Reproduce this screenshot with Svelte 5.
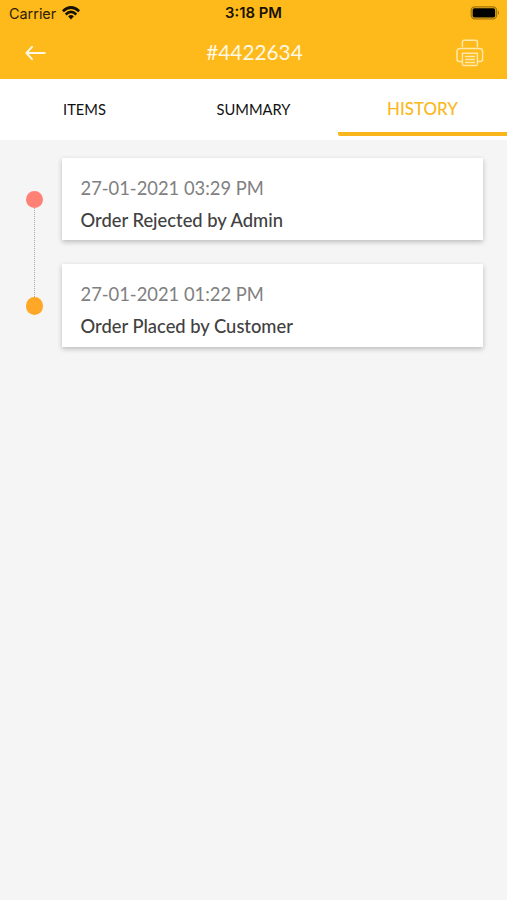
<script>
  const tabs = [
    { label: 'ITEMS', active: false },
    { label: 'SUMMARY', active: false },
    { label: 'HISTORY', active: true }
  ];
  const events = [
    { date: '27-01-2021 03:29 PM', title: 'Order Rejected by Admin', kind: 'rejected' },
    { date: '27-01-2021 01:22 PM', title: 'Order Placed by Customer', kind: 'placed' }
  ];
</script>

<div class="screen">
  <header>
    <div class="status">
      <div class="carrier">
        <span>Carrier</span>
        <svg width="18" height="14" viewBox="0 0 18 14" fill="none" stroke="#171100" stroke-width="2.7">
          <path d="M0.9 5.2Q9-2.2 17.1 5.2" />
          <path d="M3.7 8.4Q9 3.4 14.3 8.4" />
          <path d="M6.1 10.3Q9 7.8 11.9 10.3L9 13.4Z" fill="#171100" stroke="none" />
        </svg>
      </div>
      <span class="time">3:18 PM</span>
      <svg class="battery" width="31" height="14" viewBox="0 0 31 14">
        <rect x="1.2" y="0.8" width="25.4" height="12" rx="3.6" fill="none" stroke="#a1740c" stroke-width="1.2" />
        <rect x="2.6" y="2.2" width="22.6" height="9.4" rx="1.8" fill="#000" />
        <path d="M28 4.6Q30.2 6.8 28 9Z" fill="#a1740c" />
      </svg>
    </div>
    <div class="bar">
      <svg class="back" width="22" height="16" viewBox="0 0 22 16" fill="none" stroke="#fff8e4" stroke-width="1.9" stroke-linecap="round" stroke-linejoin="round">
        <path d="M19.8 8H1.6M7 1.8L1.4 8l5.6 6.2" />
      </svg>
      <h1>#4422634</h1>
      <svg class="printer" width="28" height="28" viewBox="0 0 28 28" fill="none" stroke="#ffe9a8" stroke-width="1.5" stroke-linejoin="round" stroke-linecap="round">
        <path d="M6.4 7.6V3a1.8 1.8 0 0 1 1.8-1.8h11.4A1.8 1.8 0 0 1 21.4 3v4.6" />
        <path d="M6.4 22.4H3.2A2.2 2.2 0 0 1 1 20.2V12.4a3 3 0 0 1 3-3h19.6a3 3 0 0 1 3 3v7.8a2.2 2.2 0 0 1-2.2 2.2h-3" />
        <path d="M6.4 14.2h15V25a1.6 1.6 0 0 1-1.6 1.6H8A1.6 1.6 0 0 1 6.4 25ZM9.5 17.6h9M9.5 20.5h9M9.5 23.4h9" />
      </svg>
    </div>
  </header>

  <nav>
    {#each tabs as tab}
      <div class="tab" class:active={tab.active}><span>{tab.label}</span></div>
    {/each}
  </nav>

  <main>
    {#each events as event, i}
      <div class="event">
        <div class="rail">
          <i class="dot {event.kind}"></i>
          {#if i < events.length - 1}<i class="line"></i>{/if}
        </div>
        <article>
          <time>{event.date}</time>
          <p>{event.title}</p>
        </article>
      </div>
    {/each}
  </main>
</div>

<style>
  :global(body) { margin: 0; background: #f5f5f5; }
  .screen {
    width: 507px;
    height: 900px;
    background: #f5f5f5;
    font-family: Lato, sans-serif;
    overflow: hidden;
  }
  svg { display: block; }
  header { height: 79px; background: #feb91a; }
  .status {
    display: grid;
    grid-template-columns: 1fr auto 1fr;
    align-items: center;
    height: 27px;
    padding: 0 6px 0 9px;
    font: 14.4px/27px Inter, sans-serif;
    color: #2c2003;
  }
  .carrier { display: flex; align-items: center; gap: 6px; }
  .carrier svg { margin-top: -2px; }
  .time { margin-right: 3px; font-weight: 600; font-size: 14.8px; color: #171100; }
  .battery { justify-self: end; margin-top: -1px; }
  .bar {
    display: grid;
    grid-template-columns: 1fr auto 1fr;
    align-items: center;
    height: 52px;
    padding: 0 23px 0 25px;
  }
  .back { margin-top: -1px; }
  h1 { margin: -2px 0 0; font-size: 20.8px; line-height: 50px; font-weight: 400; color: #fff8e4; }
  .printer { justify-self: end; margin-top: -1px; }
  nav { display: flex; height: 61px; background: #fff; }
  .tab {
    flex: 0 0 169px;
    display: flex;
    justify-content: center;
    box-sizing: border-box;
    height: 57px;
    font-size: 14.7px;
    line-height: 60px;
    color: #111;
  }
  .active {
    border-bottom: 4px solid #f9b51c;
    border-radius: 2px 0 0 2px;
    font-size: 16.9px;
    font-weight: 500;
    color: #f9b820;
  }
  main { display: flex; flex-direction: column; gap: 24px; padding: 18px 24px 0 26px; }
  .event { display: flex; gap: 19px; height: 82.3px; }
  .rail { display: flex; flex-direction: column; align-items: center; width: 17px; padding-top: 33px; }
  .dot { flex: none; width: 17.4px; height: 17.4px; border-radius: 50%; }
  .rejected { background: #ff8176; }
  .placed { background: #ffa827; }
  .line { flex: none; height: 89px; border-left: 1px dotted #aaa; }
  article {
    flex: 1;
    box-sizing: border-box;
    padding: 18px 18.5px;
    background: #fff;
    box-shadow: 0 2px 5px rgba(0, 0, 0, 0.24);
  }
  time { display: block; font-size: 18.35px; line-height: 24px; color: #808080; }
  p { margin: 8px 0 0; font-size: 18.35px; line-height: 24px; font-weight: 500; color: #414141; }
</style>
